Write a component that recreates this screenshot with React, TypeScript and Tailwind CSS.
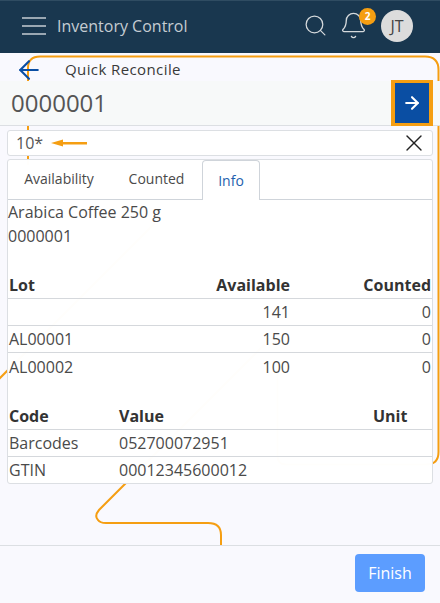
import { ArrowLeft, ArrowRight, Bell, Search, X } from "lucide-react";

const lots = [
  { lot: "", available: "141", counted: "0" },
  { lot: "AL00001", available: "150", counted: "0" },
  { lot: "AL00002", available: "100", counted: "0" },
];

const codes = [
  { code: "Barcodes", value: "052700072951", unit: "" },
  { code: "GTIN", value: "00012345600012", unit: "" },
];

function Guide() {
  return (
    <svg className="absolute left-0 top-0 pointer-events-none" width="440" height="603" fill="none" stroke="#f59e12" strokeWidth="2">
      <path d="M28 165V68Q28 56.500 40 56.500H425Q438.500 56.500 438.500 70V452Q438.500 464.500 426 464.500H286Q277.500 464.500 277.500 456V372" />
      <path d="M-2 380L155 223" />
      <path d="M265 344L99 510Q94 516 98 520Q100 523 106 523H208Q221 523 221 535V546" />
    </svg>
  );
}

export default function App() {
  return (
    <div className="relative h-[603px] w-[440px] overflow-hidden bg-[#f9f9fe] font-['Open_Sans',sans-serif] text-[#4a4a4a]">
      <header className="flex h-[53px] items-center border-t border-[#2f4c62] bg-[#19374f] pb-[3px] pl-[22px] pr-[27px]">
        <div className="flex w-6 flex-col gap-[6px]">
          <span className="h-[2px] w-full bg-[#9aa7b2]" />
          <span className="h-[2px] w-full bg-[#9aa7b2]" />
          <span className="h-[2px] w-full bg-[#9aa7b2]" />
        </div>
        <span className="ml-[11px] text-base text-[#c5ccd2]">Inventory Control</span>
        <Search className="ml-auto text-[#d5d9dc]" size={25} strokeWidth={1.2} />
        <div className="relative ml-[11px]">
          <Bell className="text-[#d5d9dc]" size={29} strokeWidth={1.1} />
          <span className="absolute -right-[8px] -top-[3px] flex h-[17px] w-[17px] items-center justify-center rounded-full bg-[#f59e12] text-[10px] font-bold text-white">2</span>
        </div>
        <span className="ml-[13px] flex h-8 w-8 items-center justify-center rounded-full bg-[#dcdcdc] text-base text-[#444]">JT</span>
      </header>

      <Guide />

      <main className="relative px-[7px]">
        <div className="flex h-7 items-center pt-[5px]">
          <ArrowLeft className="ml-[7px] text-[#0a4ea3]" size={30} strokeWidth={1.7} />
          <span className="ml-[21px] text-[15px] font-medium tracking-[0.4px] text-[#3a3a3a]">Quick Reconcile</span>
        </div>

        <div className="-mx-[7px] flex h-[45px] items-center justify-between border-b border-[#dcdfe3] bg-[#f7f9f9] pl-[11px] pr-[7px]">
          <span className="text-2xl text-[#555]">0000001</span>
          <button className="-mt-px flex h-[46px] w-[42px] items-center justify-center self-start border-x-4 border-y-[3px] border-[#f59e12] bg-[#0a4ea3] text-white">
            <ArrowRight size={20} strokeWidth={2.5} />
          </button>
        </div>

        <div className="relative mt-[4px] flex h-[26px] items-center justify-between rounded-[3px] border border-[#dcdfe3] bg-white pl-2 pr-[4px]">
          <span className="text-base text-[#555]">10*</span>
          <X size={28} strokeWidth={1.15} className="text-[#222]" />
          <svg className="absolute left-[43px] top-[7px]" width="36" height="10" fill="#f59e12">
            <path d="M0 5L12 1.500V4H36V6.500H12V8.500Z" />
          </svg>
        </div>

        <section className="relative mt-[3px] rounded-[3px] border border-[#dcdfe3] bg-white/[0.99]">
          <div className="flex h-[40px] items-end border-b border-[#cfd4da] text-sm">
            <span className="flex h-[40px] w-[103px] items-center justify-center pr-[1px]">Availability</span>
            <span className="flex h-[40px] w-[91px] items-center justify-center">Counted</span>
            <span className="-mb-px flex h-[40px] w-[58px] items-center justify-center rounded-t-[4px] border border-b-0 border-[#cfd4da] bg-white text-[#1f5fae]">Info</span>
          </div>

          <div className="text-base leading-6">
            <p>Arabica Coffee 250 g</p>
            <p>0000001</p>
          </div>

          <div className="mt-[24px]">
            <div className="grid h-[27px] grid-cols-[1fr_100px_141px] items-center border-b border-[#d5d8dc] px-px font-bold text-[#333]">
              <span>Lot</span>
              <span className="text-right">Available</span>
              <span className="text-right">Counted</span>
            </div>
            {lots.map((row, i) => (
              <div key={i} className={`grid h-[27px] grid-cols-[1fr_100px_141px] items-center px-px ${i < lots.length - 1 ? "border-b border-[#d5d8dc]" : ""}`}>
                <span>{row.lot}</span>
                <span className="text-right">{row.available}</span>
                <span className="text-right">{row.counted}</span>
              </div>
            ))}
          </div>

          <div className="mt-[23px]">
            <div className="grid h-[27px] grid-cols-[110px_254px_1fr] items-center border-b border-[#d5d8dc] px-px font-bold text-[#333]">
              <span>Code</span>
              <span>Value</span>
              <span>Unit</span>
            </div>
            {codes.map((row, i) => (
              <div key={row.code} className={`grid items-center px-px grid-cols-[110px_254px_1fr] ${i === 0 ? "h-[27px] border-b border-[#d5d8dc]" : "h-[26px]"}`}>
                <span>{row.code}</span>
                <span>{row.value}</span>
                <span>{row.unit}</span>
              </div>
            ))}
          </div>
        </section>
      </main>

      <footer className="absolute bottom-0 left-0 flex h-[58px] w-full items-start justify-end border-t border-[#dcdfe3] pr-[15px] pt-[8px]">
        <button className="h-[38px] w-[70px] rounded-[4px] bg-[#5c9dff] text-base text-white">Finish</button>
      </footer>
    </div>
  );
}
